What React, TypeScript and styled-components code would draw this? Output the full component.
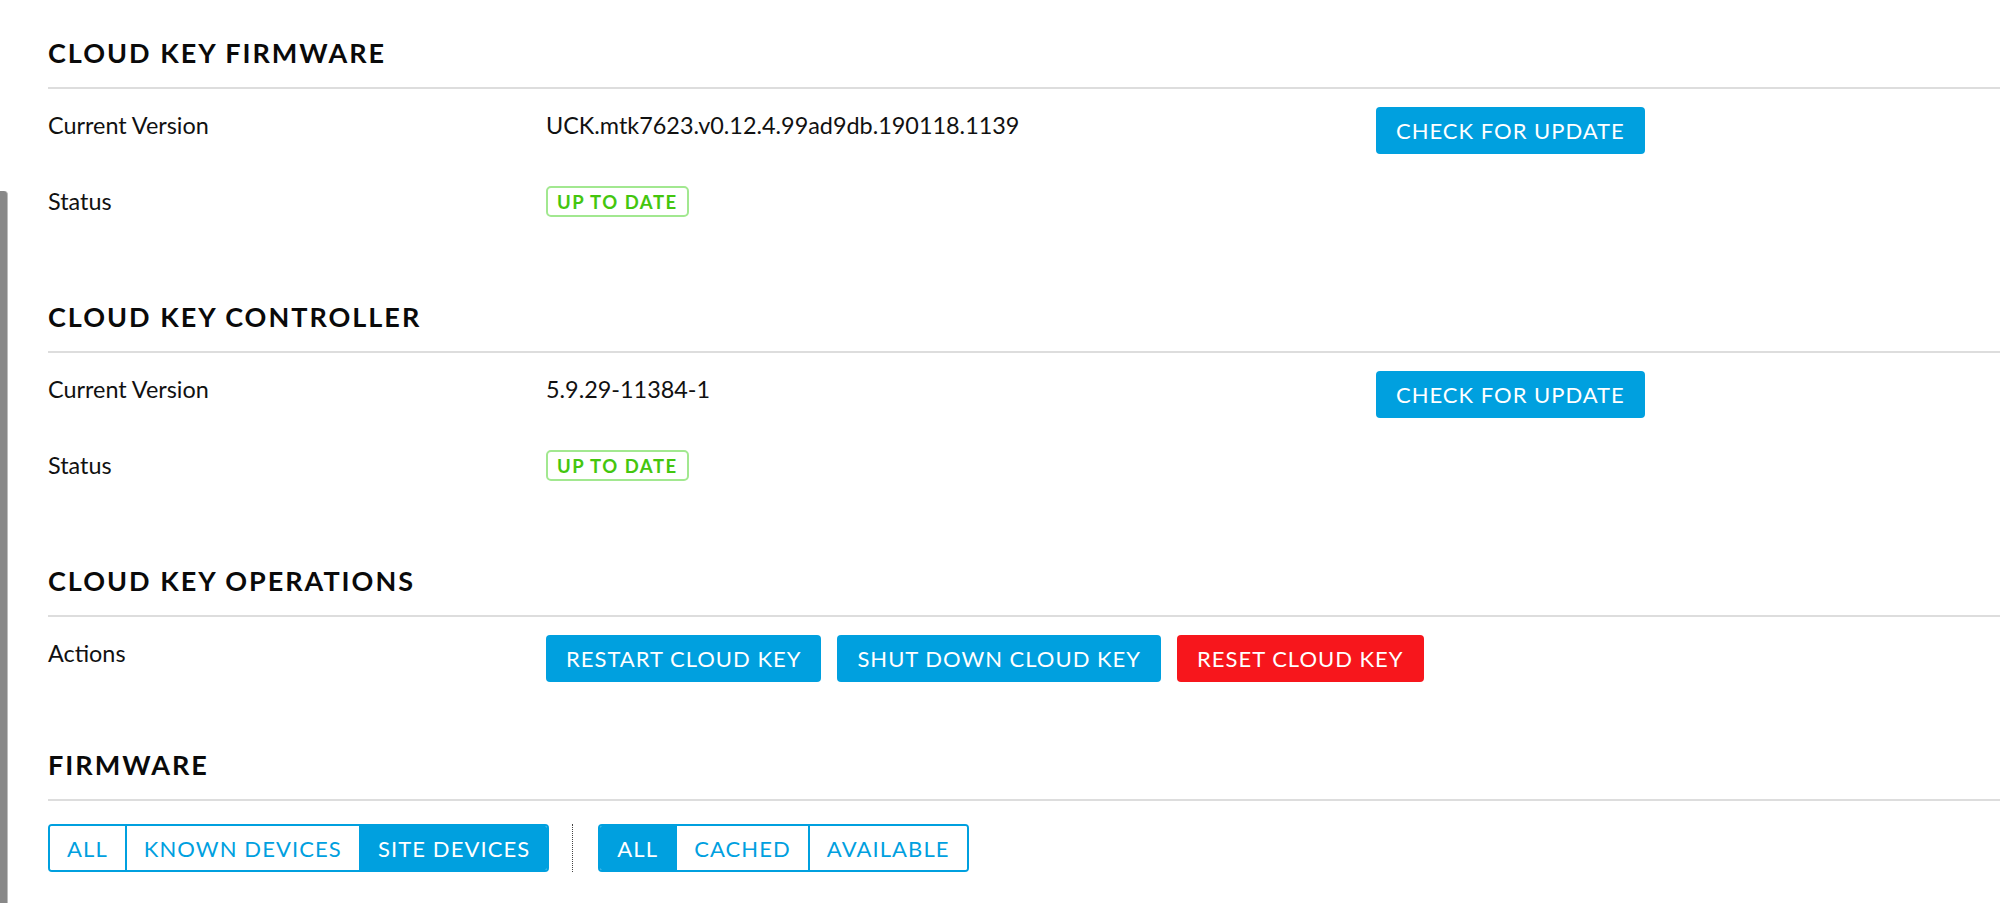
import React from 'react';
import styled, { createGlobalStyle } from 'styled-components';

const BLUE = '#00a0df';
const RED = '#f7161c';

const GlobalStyle = createGlobalStyle`
  html, body {
    margin: 0;
    padding: 0;
    background: #ffffff;
  }

  body {
    font-family: Lato, 'Open Sans', sans-serif;
    color: #111111;
  }
`;

type RowType = {
  label: string,
  value?: string,
  status?: string,
  action?: string,
};

const firmwareRows: RowType[] = [
  { label: 'Current Version', value: 'UCK.mtk7623.v0.12.4.99ad9db.190118.1139', action: 'Check for update' },
  { label: 'Status', status: 'Up to date' },
];

const controllerRows: RowType[] = [
  { label: 'Current Version', value: '5.9.29-11384-1', action: 'Check for update' },
  { label: 'Status', status: 'Up to date' },
];

export default function App() {
  const renderRows = (rows: RowType[]) => (
    <Rows>
      {rows.map((row) => (
        <Row key={row.label}>
          <Label>{row.label}</Label>
          <Cell>
            {row.status ? <StatusBadge>{row.status}</StatusBadge> : row.value}
          </Cell>
          {row.action && <Button>{row.action}</Button>}
        </Row>
      ))}
    </Rows>
  );

  return (
    <>
      <GlobalStyle />
      <Page>
        <ScrollTrack>
          <ScrollThumb />
        </ScrollTrack>

        <Content>
          <Section $spaceAfter={80}>
            <Title>Cloud Key Firmware</Title>
            <Divider />
            {renderRows(firmwareRows)}
          </Section>

          <Section $spaceAfter={80}>
            <Title>Cloud Key Controller</Title>
            <Divider />
            {renderRows(controllerRows)}
          </Section>

          <Section $spaceAfter={65}>
            <Title>Cloud Key Operations</Title>
            <Divider />
            <Rows>
              <Row>
                <Label>Actions</Label>
                <ButtonGroup>
                  <Button>Restart Cloud Key</Button>
                  <Button>Shut Down Cloud Key</Button>
                  <Button $danger>Reset Cloud Key</Button>
                </ButtonGroup>
              </Row>
            </Rows>
          </Section>

          <Section $spaceAfter={0}>
            <Title>Firmware</Title>
            <Divider />
            <FilterBar>
              <SegGroup>
                <Seg>All</Seg>
                <Seg>Known Devices</Seg>
                <Seg $active>Site Devices</Seg>
              </SegGroup>
              <DottedSeparator />
              <SegGroup>
                <Seg $active>All</Seg>
                <Seg>Cached</Seg>
                <Seg>Available</Seg>
              </SegGroup>
            </FilterBar>
          </Section>
        </Content>
      </Page>
    </>
  );
}

const Page = styled.div`
  display: flex;
  min-height: 903px;
  overflow: hidden;
`;

const ScrollTrack = styled.div`
  width: 8px;
  flex-shrink: 0;
  display: flex;
  flex-direction: column;
  padding-top: 191px;
  box-sizing: border-box;
`;

const ScrollThumb = styled.div`
  flex: 1;
  width: 7px;
  background: #888888;
  border-right: 1px solid #bdbdbd;
  border-top-right-radius: 4px;
`;

const Content = styled.div`
  flex: 1;
  padding: 35px 0 0 40px;
`;

const Section = styled.section<{ $spaceAfter: number }>`
  margin-bottom: ${(props) => props.$spaceAfter}px;
`;

const Title = styled.h2`
  margin: 0;
  font-size: 27px;
  line-height: 36px;
  font-weight: 700;
  letter-spacing: 2px;
  text-transform: uppercase;
  color: #0a0a0a;
`;

const Divider = styled.div`
  height: 2px;
  margin-top: 16px;
  background: #dddddd;
`;

const Rows = styled.div`
  padding-top: 18px;
`;

const Row = styled.div`
  display: grid;
  grid-template-columns: 498px 830px 1fr;
  align-items: start;

  & + & {
    margin-top: 29px;
  }
`;

const Label = styled.div`
  font-size: 23.4px;
  line-height: 36px;
  color: #111111;
`;

const Cell = styled.div`
  font-size: 23.4px;
  line-height: 36px;
  color: #111111;
`;

const StatusBadge = styled.span`
  display: inline-flex;
  align-items: center;
  height: 31px;
  margin-top: 3px;
  padding: 0 9px;
  box-sizing: border-box;
  border: 2px solid #a2e890;
  border-radius: 5px;
  font-size: 18.5px;
  font-weight: 700;
  letter-spacing: 1.5px;
  text-transform: uppercase;
  color: #44c60e;
  vertical-align: top;
`;

const ButtonGroup = styled.div`
  grid-column: 2 / span 2;
  display: flex;
  gap: 16px;
`;

const Button = styled.button<{ $danger?: boolean }>`
  justify-self: start;
  height: 47px;
  padding: 0 20px;
  border: none;
  border-radius: 4px;
  background: ${(props) => (props.$danger ? RED : BLUE)};
  color: #ffffff;
  font-family: Lato, 'Open Sans', sans-serif;
  font-size: 22px;
  letter-spacing: 1px;
  text-transform: uppercase;
  cursor: pointer;
`;

const FilterBar = styled.div`
  display: flex;
  align-items: center;
  margin-top: 23px;
`;

const SegGroup = styled.div`
  display: flex;
  height: 48px;
  box-sizing: border-box;
  border: 2px solid ${BLUE};
  border-radius: 4px;
  overflow: hidden;
`;

const Seg = styled.button<{ $active?: boolean }>`
  padding: 0 17px;
  border: none;
  background: ${(props) => (props.$active ? BLUE : '#ffffff')};
  color: ${(props) => (props.$active ? '#ffffff' : BLUE)};
  font-family: Lato, 'Open Sans', sans-serif;
  font-size: 22px;
  letter-spacing: 1.1px;
  text-transform: uppercase;
  cursor: pointer;

  & + & {
    border-left: 2px solid ${BLUE};
  }
`;

const DottedSeparator = styled.div`
  height: 48px;
  margin: 0 25px 0 23px;
  border-left: 1px dotted #444444;
`;
